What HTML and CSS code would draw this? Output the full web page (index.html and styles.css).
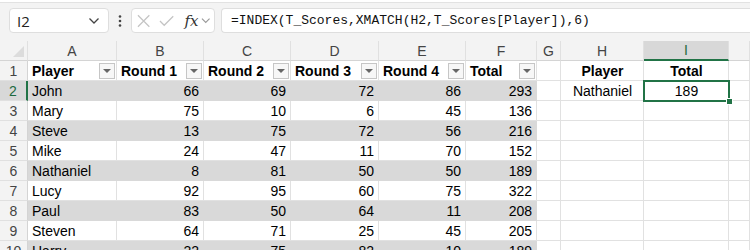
FILE: index.html
```html
<!DOCTYPE html>
<html>
<head>
<meta charset="utf-8">
<link rel="stylesheet" href="styles.css">
</head>
<body>
<div class="topline"></div>
<div class="toolbar">
  <div class="namebox">
    <span class="nb-text">I2</span>
    <svg class="chev" width="12" height="8" viewBox="0 0 12 8"><path d="M1.5 1.5 L6 6 L10.5 1.5" fill="none" stroke="#444" stroke-width="1.3"/></svg>
  </div>
  <div class="dots">
    <svg width="4" height="12" viewBox="0 0 4 12"><circle cx="2" cy="1.5" r="1.3" fill="#444"/><circle cx="2" cy="6" r="1.3" fill="#444"/><circle cx="2" cy="10.5" r="1.3" fill="#444"/></svg>
  </div>
  <div class="fxbox">
    <svg width="14" height="14" viewBox="0 0 14 14"><path d="M1 1 L13 13 M13 1 L1 13" stroke="#c4c4c4" stroke-width="1.3" fill="none"/></svg>
    <svg width="16" height="12" viewBox="0 0 16 12"><path d="M1 6 L5.5 10.5 L15 1" stroke="#c4c4c4" stroke-width="1.3" fill="none"/></svg>
    <span class="fx">fx</span>
    <svg class="fxchev" width="10" height="7" viewBox="0 0 10 7"><path d="M1 1.5 L5 5.5 L9 1.5" fill="none" stroke="#999" stroke-width="1.2"/></svg>
  </div>
  <div class="formula">=INDEX(T_Scores,XMATCH(H2,T_Scores[Player]),6)</div>
</div>
<div class="sheet">
  <div class="ch corner"><span class="tri"></span></div>
  <div class="ch">A</div><div class="ch">B</div><div class="ch">C</div><div class="ch">D</div><div class="ch">E</div><div class="ch">F</div><div class="ch">G</div><div class="ch">H</div><div class="ch sel-col">I</div><div class="ch"></div>

  <div class="rh">1</div>
  <div class="c th"><span>Player</span><i class="flt"></i></div>
  <div class="c th"><span>Round 1</span><i class="flt"></i></div>
  <div class="c th"><span>Round 2</span><i class="flt"></i></div>
  <div class="c th"><span>Round 3</span><i class="flt"></i></div>
  <div class="c th"><span>Round 4</span><i class="flt"></i></div>
  <div class="c th"><span>Total</span><i class="flt"></i></div>
  <div class="c"></div>
  <div class="c b ctr">Player</div>
  <div class="c b ctr">Total</div>
  <div class="c"></div>

  <div class="rh sel-row">2</div>
  <div class="c g">John</div><div class="c g r">66</div><div class="c g r">69</div><div class="c g r">72</div><div class="c g r">86</div><div class="c g r">293</div>
  <div class="c"></div><div class="c ctr">Nathaniel</div><div class="c ctr active">189<span class="selbox"></span><span class="handle"></span></div><div class="c"></div>

  <div class="rh">3</div>
  <div class="c">Mary</div><div class="c r">75</div><div class="c r">10</div><div class="c r">6</div><div class="c r">45</div><div class="c r">136</div>
  <div class="c"></div><div class="c"></div><div class="c"></div><div class="c"></div>

  <div class="rh">4</div>
  <div class="c g">Steve</div><div class="c g r">13</div><div class="c g r">75</div><div class="c g r">72</div><div class="c g r">56</div><div class="c g r">216</div>
  <div class="c"></div><div class="c"></div><div class="c"></div><div class="c"></div>

  <div class="rh">5</div>
  <div class="c">Mike</div><div class="c r">24</div><div class="c r">47</div><div class="c r">11</div><div class="c r">70</div><div class="c r">152</div>
  <div class="c"></div><div class="c"></div><div class="c"></div><div class="c"></div>

  <div class="rh">6</div>
  <div class="c g">Nathaniel</div><div class="c g r">8</div><div class="c g r">81</div><div class="c g r">50</div><div class="c g r">50</div><div class="c g r">189</div>
  <div class="c"></div><div class="c"></div><div class="c"></div><div class="c"></div>

  <div class="rh">7</div>
  <div class="c">Lucy</div><div class="c r">92</div><div class="c r">95</div><div class="c r">60</div><div class="c r">75</div><div class="c r">322</div>
  <div class="c"></div><div class="c"></div><div class="c"></div><div class="c"></div>

  <div class="rh">8</div>
  <div class="c g">Paul</div><div class="c g r">83</div><div class="c g r">50</div><div class="c g r">64</div><div class="c g r">11</div><div class="c g r">208</div>
  <div class="c"></div><div class="c"></div><div class="c"></div><div class="c"></div>

  <div class="rh">9</div>
  <div class="c">Steven</div><div class="c r">64</div><div class="c r">71</div><div class="c r">25</div><div class="c r">45</div><div class="c r">205</div>
  <div class="c"></div><div class="c"></div><div class="c"></div><div class="c"></div>

  <div class="rh">10</div>
  <div class="c g">Harry</div><div class="c g r">22</div><div class="c g r">75</div><div class="c g r">82</div><div class="c g r">10</div><div class="c g r">189</div>
  <div class="c"></div><div class="c"></div><div class="c"></div><div class="c"></div>
</div>
</body>
</html>
```
FILE: styles.css
```css
html, body {
  margin: 0;
  padding: 0;
  width: 750px;
  height: 250px;
  overflow: hidden;
  background: #ffffff;
  font-family: "Liberation Sans", Arial, sans-serif;
}

.topline {
  height: 2px;
  background: #ffffff;
  border-bottom: 1px solid #e2e2e2;
}

.toolbar {
  height: 38px;
  background: #f3f3f3;
  display: flex;
  align-items: flex-start;
  padding-top: 5px;
  box-sizing: border-box;
  padding-left: 9px;
}

.namebox {
  width: 100px;
  height: 25px;
  box-sizing: border-box;
  background: #fff;
  border: 1px solid #dedede;
  border-radius: 4px;
  display: flex;
  align-items: center;
  justify-content: space-between;
  padding: 0 8px 0 7px;
}

.nb-text {
  font-family: "Open Sans", "Liberation Sans", sans-serif;
  font-size: 15px;
  color: #222;
}

.dots {
  width: 22px;
  height: 25px;
  display: flex;
  align-items: center;
  justify-content: center;
}

.fxbox {
  width: 84px;
  height: 25px;
  box-sizing: border-box;
  background: #fff;
  border: 1px solid #dedede;
  border-radius: 4px;
  display: flex;
  align-items: center;
  padding: 0 4px 0 5px;
  gap: 9px;
}

.fx {
  font-family: "DejaVu Serif", "Liberation Serif", serif;
  font-style: italic;
  font-size: 15px;
  color: #333;
  margin-left: 1px;
  margin-right: -7px;
}

.formula {
  margin-left: 6px;
  flex: 1;
  height: 25px;
  box-sizing: border-box;
  background: #fff;
  border: 1px solid #dedede;
  border-right: none;
  border-radius: 4px 0 0 4px;
  font-family: "Liberation Mono", "DejaVu Sans Mono", monospace;
  font-size: 13px;
  color: #111;
  display: flex;
  align-items: center;
  padding-left: 9px;
}

.sheet {
  display: grid;
  grid-template-columns: 28px 89px 87px 87px 88px 87px 71px 24px 83px 85px 21px;
  grid-auto-rows: 20px;
  background: #ffffff;
}

.ch {
  background: #f3f3f3;
  border-right: 1px solid #e0e0e0;
  border-bottom: 1px solid #d4d4d4;
  box-sizing: border-box;
  display: flex;
  align-items: center;
  justify-content: center;
  font-size: 14px;
  color: #444;
}

.corner {
  position: relative;
}

.tri {
  position: absolute;
  right: 3px;
  bottom: 3px;
  width: 0;
  height: 0;
  border-left: 11px solid transparent;
  border-bottom: 11px solid #dcdcdc;
}

.sel-col {
  background: #d8d8d8;
  border-bottom: 2px solid #217346;
  color: #1d6a3f;
}

.rh {
  background: #f3f3f3;
  border-right: 1px solid #d4d4d4;
  border-bottom: 1px solid #e0e0e0;
  box-sizing: border-box;
  display: flex;
  align-items: center;
  justify-content: center;
  font-size: 14px;
  color: #444;
}

.sel-row {
  background: #d8d8d8;
  border-right: 2px solid #217346;
  color: #1d6a3f;
}

.c {
  border-right: 1px solid #e1e1e1;
  border-bottom: 1px solid #e1e1e1;
  box-sizing: border-box;
  display: flex;
  align-items: center;
  padding: 0 3px 0 4px;
  font-size: 14px;
  color: #000;
  white-space: nowrap;
  overflow: hidden;
}

.c.g {
  background: #d9d9d9;
  border-color: #d9d9d9;
}

.c.r {
  justify-content: flex-end;
  padding-right: 4px;
}

.c.ctr {
  justify-content: center;
}

.c.b {
  font-weight: bold;
}

.th {
  font-weight: bold;
  justify-content: space-between;
  padding-right: 1px;
}

.flt {
  width: 16px;
  height: 16px;
  box-sizing: border-box;
  border: 1px solid #c6c6c6;
  background: #f7f7f7 ;
  display: flex;
  align-items: center;
  justify-content: center;
}

.flt::after {
  content: "";
  width: 0;
  height: 0;
  border-left: 4px solid transparent;
  border-right: 4px solid transparent;
  border-top: 4px solid #666;
}

.active {
  position: relative;
  overflow: visible;
}

.selbox {
  position: absolute;
  left: -1px;
  top: -1px;
  right: -2px;
  bottom: -2px;
  border: 2px solid #217346;
  pointer-events: none;
}

.handle {
  position: absolute;
  right: -5px;
  bottom: -5px;
  width: 5px;
  height: 5px;
  background: #217346;
  border: 1px solid #fff;
}
```
